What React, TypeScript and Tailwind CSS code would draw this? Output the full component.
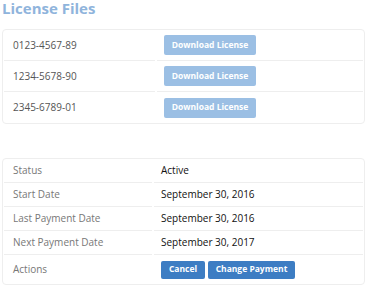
const licenses = ['0123-4567-89', '1234-5678-90', '2345-6789-01']

const details = [
  { label: 'Status', value: 'Active' },
  { label: 'Start Date', value: 'September 30, 2016' },
  { label: 'Last Payment Date', value: 'September 30, 2016' },
  { label: 'Next Payment Date', value: 'September 30, 2017' },
]

export default function App() {
  return (
    <main className="w-[367px] h-[286px] bg-white pl-[2px] pr-[2px] font-['Open_Sans',sans-serif] overflow-hidden">
      <h2 className="text-[15px] leading-[17px] font-bold text-[#8fb4dc]">License Files</h2>

      {/* License list */}
      <section className="mt-[12px] w-[363px] border border-[#eeeeee] rounded-[4px] px-px">
        <div className="grid grid-cols-[151px_1fr] gap-x-[2px]">
          {licenses.map((id, i) => (
            <div key={id} className="contents">
              <div
                className={`h-[31px] flex items-center pl-[9px] text-[10px] text-[#555] ${i < licenses.length - 1 ? 'border-b border-[#eeeeee]' : ''}`}
              >
                {id}
              </div>
              <div
                className={`h-[31px] flex items-center pl-[7px] ${i < licenses.length - 1 ? 'border-b border-[#eeeeee]' : ''}`}
              >
                <button className="h-[20px] w-[92px] rounded-[2px] bg-[#9bbfe4] text-white text-[8.5px] font-bold">
                  Download License
                </button>
              </div>
            </div>
          ))}
        </div>
      </section>

      {/* Subscription details */}
      <section className="mt-[34px] w-[363px] border border-[#eeeeee] rounded-[4px] px-px">
        <div className="grid grid-cols-[148px_1fr] gap-x-[2px]">
          {details.map((d) => (
            <div key={d.label} className="contents">
              <div className="h-[24px] flex items-center pl-[9px] text-[10px] text-[#777] border-b border-[#eeeeee]">
                {d.label}
              </div>
              <div className="h-[24px] flex items-center pl-[7px] text-[10px] text-[#111] border-b border-[#eeeeee]">
                {d.value}
              </div>
            </div>
          ))}
          <div className="h-[29px] flex items-center pl-[9px] text-[10px] text-[#777]">Actions</div>
          <div className="h-[29px] flex items-center gap-[3px] pl-[7px]">
            <button className="h-[18px] w-[44px] rounded-[2px] bg-[#3d7dc3] text-white text-[8.5px] font-bold">
              Cancel
            </button>
            <button className="h-[18px] w-[87px] rounded-[2px] bg-[#3d7dc3] text-white text-[8.5px] font-bold">
              Change Payment
            </button>
          </div>
        </div>
      </section>
    </main>
  )
}
